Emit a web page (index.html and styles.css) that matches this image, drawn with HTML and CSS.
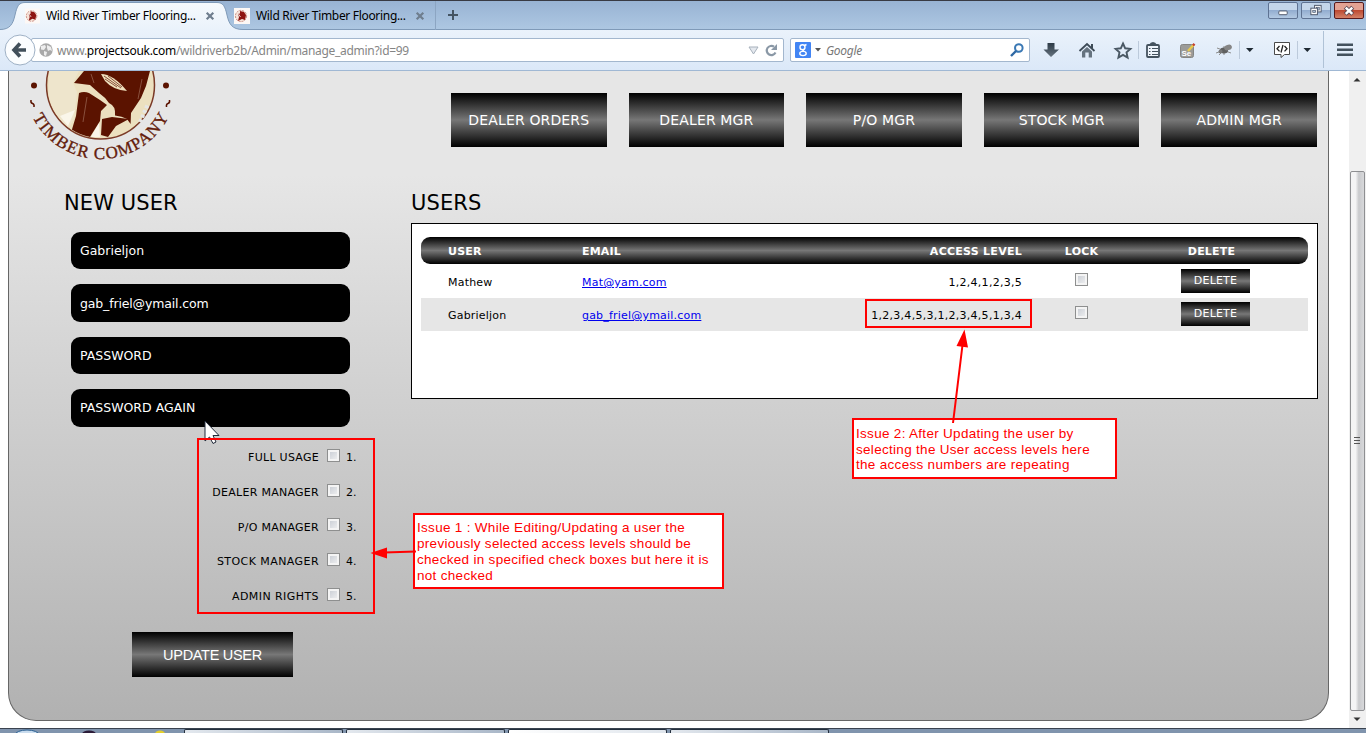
FILE: index.html
```html
<!DOCTYPE html>
<html lang="en">
<head>
<meta charset="utf-8">
<title>Wild River Timber Flooring</title>
<link rel="stylesheet" href="styles.css">
</head>
<body>
<svg width="0" height="0" class="defs">
  <defs>
    <symbol id="fav" viewBox="0 0 16 16">
      <rect width="16" height="16" fill="#fdf8f5"/>
      <circle cx="7" cy="8" r="5.6" fill="#f6e4da" stroke="#c98a7e" stroke-dasharray="2 1"/>
      <path d="M6 3l4 1 2 3-1 5-3-1-4 2 1-4-1-3 2-.5z" fill="#8e1410"/>
      <path d="M4.500 6l2 3" stroke="#fff" stroke-width=".8"/>
    </symbol>
    <symbol id="close" viewBox="0 0 10 10"><path d="M1.700 1.700l6.600 6.600M8.300 1.700l-6.600 6.600" stroke="#6f7e8e" stroke-width="2.200"/></symbol>
    <linearGradient id="dk" x1="0" y1="0" x2="0" y2="1"><stop offset="0" stop-color="#2c3a46"/><stop offset="1" stop-color="#66737f"/></linearGradient>
  </defs>
</svg>
<div class="browser">
  <header class="tabbar">
    <svg class="tabshape" width="250" height="30" viewBox="0 0 250 30">
      <defs><linearGradient id="tg" x1="0" y1="0" x2="0" y2="1"><stop offset="0" stop-color="#f6fafd"/><stop offset="1" stop-color="#eaf2fb"/></linearGradient></defs>
      <path d="M0 30V29.500C10 29.500 13 24 15 15C17 6 19 2.500 25 2.500H217C223 2.500 225 6 227 15C229 24 232 29.500 243 29.500V30z" fill="url(#tg)"/>
      <path d="M0 29.500C10 29.500 13 24 15 15C17 6 19 2.500 25 2.500H217C223 2.500 225 6 227 15C229 24 232 29.500 243 29.500" fill="none" stroke="#7f9ab8"/>
    </svg>
    <div class="tab first"><svg width="15" height="16"><use href="#fav"/></svg><span>Wild River Timber Flooring...</span><svg width="10" height="10"><use href="#close"/></svg></div>
    <div class="tab second"><svg width="16" height="16"><use href="#fav"/></svg><span>Wild River Timber Flooring...</span><svg width="10" height="10"><use href="#close"/></svg></div>
    <div class="newtab"><svg width="12" height="12" viewBox="0 0 12 12"><path d="M6 1v10M1 6h10" stroke="#445463" stroke-width="2"/></svg></div>
    <div class="wincontrols">
      <svg width="30" height="16" viewBox="0 0 30 16"><rect x="10.500" y="8.500" width="9" height="4" rx="1" fill="#fff" stroke="#4a5366"/></svg>
      <svg width="30" height="16" viewBox="0 0 30 16"><rect x="13.500" y="2.500" width="7" height="7" fill="#fff" stroke="#4a5366"/><rect x="15.500" y="4.500" width="3" height="3" fill="#a8bed6" stroke="#4a5366" stroke-width=".7"/><rect x="9.500" y="5.500" width="7" height="7" fill="#fff" stroke="#4a5366"/><rect x="11.500" y="8" width="3" height="2" fill="#a8bed6" stroke="#4a5366" stroke-width=".7"/></svg>
      <svg class="x" width="30" height="16" viewBox="0 0 30 16"><path d="M11 4.500l8 7.500M19 4.500l-8 7.500" stroke="#5a4a56" stroke-width="4.600"/><path d="M11.500 5l7 6.500M18.500 5l-7 6.500" stroke="#fff" stroke-width="2.600"/></svg>
    </div>
  </header>
  <nav class="toolbar">
    <div class="back"><svg width="32" height="32" viewBox="0 0 32 32"><circle cx="16" cy="16" r="15" fill="#fbfdff" stroke="#9fb1c5"/><path d="M22 16H10.500M16 9.500L10 16l6 6.500" fill="none" stroke="#414f5b" stroke-width="3.600"/></svg></div>
    <div class="url">
      <svg width="14" height="14" viewBox="0 0 14 14"><circle cx="7" cy="7" r="6.700" fill="#a9a9a9"/><path d="M2 3l4-1 1 2-2 3-3-.5zM8 2l4 2 1 4-2-1-2 1-1-3zM5 8l3 1-1 4-2-1z" fill="#eee"/></svg>
      <span class="addr">www.<b>projectsouk.com</b>/wildriverb2b/Admin/manage_admin?id=99</span>
      <svg width="11" height="9" viewBox="0 0 11 9"><path d="M1 1h9L5.500 8z" fill="#e4e8ee" stroke="#a7b1bc"/></svg>
      <svg class="reload" width="13" height="13" viewBox="0 0 13 13"><path d="M10.500 8.500A4.600 4.600 0 1 1 9 2.700" fill="none" stroke="#8a98a6" stroke-width="2.200"/><path d="M12 0v6H6z" fill="#8a98a6"/></svg>
    </div>
    <div class="search">
      <svg width="16" height="16" viewBox="0 0 16 16"><rect width="16" height="16" rx="1" fill="#4285f4"/><g fill="none" stroke="#fff" stroke-width="1.400"><ellipse cx="7.500" cy="5.200" rx="2.500" ry="2.500"/><ellipse cx="8" cy="11.500" rx="3.200" ry="2.100"/><path d="M7.500 7.700l1.500 1.700M9.500 3.500l2-1"/></g></svg>
      <svg width="6" height="4" viewBox="0 0 6 4"><path d="M0 0h6L3 3.500z" fill="#555"/></svg>
      <i>Google</i>
      <svg class="mag" width="14" height="14" viewBox="0 0 14 14"><circle cx="8.800" cy="5" r="3.800" fill="none" stroke="#3a78b4" stroke-width="2"/><path d="M6 8l-5 5" stroke="#2f68a4" stroke-width="2.400"/></svg>
    </div>
    <svg class="icons" width="330" height="41" viewBox="1036 30 330 41">
      <path d="M1047.500 43h7v6.500h4.500l-8 7.500-7.500-7.500h4z" fill="url(#dk)"/>
      <path d="M1079.500 51l7.500-7 7.500 7" fill="none" stroke="#3e4b57" stroke-width="1.800"/><path d="M1082 51.500l5-4.500 5 4.500v6h-3.300v-5h-3.400v5h-3.300z" fill="#66737f"/><path d="M1091 44h2v4h-2z" fill="#3e4b57"/>
      <path d="M1123 43.500l2.200 4.800 5.200.6-3.900 3.500 1.100 5.200-4.600-2.700-4.600 2.700 1.100-5.200-3.900-3.500 5.200-.6z" fill="none" stroke="#4a5864" stroke-width="1.900"/>
      <path d="M1138.500 41v18M1239.500 41v18M1297.500 41v18" stroke="#bccadb"/>
      <path d="M1323.500 31v37" stroke="#b0c2d6"/>
      <rect x="1147" y="45" width="12" height="12" rx="1" fill="#eef4fb" stroke="#44525e" stroke-width="1.800"/><path d="M1149 45q1.500-3 4-3t4 3z" fill="#44525e"/><path d="M1149 48.500h1.500M1152 48.500h6M1149 51.500h1.500M1152 51.500h6M1149 54.500h1.500M1152 54.500h6" stroke="#44525e" stroke-width="1.200"/>
      <rect x="1180.500" y="44.500" width="13" height="13" rx="2" fill="#9b9b98" stroke="#858583"/><text x="1181.500" y="56" class="se">Se</text><path d="M1188 51l5.500-6" stroke="#e9c94c" stroke-width="2.400"/><path d="M1193 45.500l1.500-1.600" stroke="#c43e2e" stroke-width="2.400"/>
      <g stroke="#8d8d8d" stroke-width="1"><path d="M1217 48l14 5M1219 55l10-10M1224 46v9M1216 53l6-2"/></g><ellipse cx="1224" cy="50.500" rx="4" ry="3" fill="#5f6060"/><ellipse cx="1228" cy="47.500" rx="4" ry="2.700" fill="#858585" transform="rotate(-20 1228 47.500)"/><circle cx="1220.500" cy="51.500" r="2" fill="#777"/>
      <path d="M1246 48h7.500l-3.700 4zM1303.500 48h7.500l-3.700 4z" fill="#1f2a33"/>
      <path d="M1274.500 42.500h15v12h-5l-3.500 3v-3h-6.500z" fill="#fff" stroke="#4a4a4a"/><path d="M1279.500 46l-2.500 2.700 2.500 2.700M1284.500 46l2.500 2.700-2.500 2.700M1283 45l-2 7.500" fill="none" stroke="#222" stroke-width="1.300"/>
      <path d="M1337 44.800h16M1337 49.800h16M1337 54.800h16" stroke="#43515d" stroke-width="2.600"/>
    </svg>
  </nav>
  <div class="view">
    <main class="page">
      <div class="top">
        <svg class="logo" width="160" height="102" viewBox="20 71 160 102">
          <defs><path id="arc" d="M32.200 116.300A76 76 0 0 0 168.800 116.300"/><clipPath id="disc"><circle cx="100.500" cy="85" r="53"/></clipPath></defs>
          <circle cx="100.500" cy="85" r="54" fill="#ece0bf" stroke="#7b3a27" stroke-width="1.500"/>
          <g clip-path="url(#disc)">
            <path d="M49 71h30l-6 12 4 9-3 27-6 10-20-20z" fill="#eee5cc"/>
            <path d="M60 116l8 10 7-16zM99 122l-8 15h9z" fill="#faf6ea"/>
            <path d="M84 71H150L146 86 141 98 131 113 130.600 124 127 119Q122 116 115 115.500 116 106 109 103 105 97 99 93L90 85 74 83Z" fill="#5b1300"/>
            <path d="M79 93Q84 91 89 93L100 100 107 105 101 111 100 121 90 137 70 136 76 116Z" fill="#5b1300"/>
            <path d="M102 119L112 117 129 119 116 126 108 137 101 135Z" fill="#5b1300"/>
            <path d="M101 74q12 0 26 17-14-1-22-10z" fill="#eee0bd"/><path d="M104 76l17 12M108 76l14 11M105 79l12 8" stroke="#5b1300" stroke-width=".7"/>
            <path d="M142 79l-4 20M87 97l-4 25M91 74l3 9" stroke="#a87a66" stroke-width=".6"/>
          </g>
          <path d="M140 122l8-18" stroke="#e6e6e6" stroke-width="4" stroke-dasharray="3 2"/>
          <circle cx="34" cy="85.500" r="3" fill="#5b1300"/><circle cx="166" cy="85.500" r="3" fill="#5b1300"/>
          <path d="M31 100q-.5 3 1.500 3.500t1.500 3.500M169.500 100q.5 3-1.500 3.500t-1.500 3.500" fill="none" stroke="#5b1300" stroke-width="1.500"/>
          <text class="logotext"><textPath href="#arc" startOffset="1" textLength="168" lengthAdjust="spacing">TIMBER COMPANY</textPath></text>
        </svg>
        <div class="menu"><a>DEALER ORDERS</a><a>DEALER MGR</a><a>P/O MGR</a><a>STOCK MGR</a><a>ADMIN MGR</a></div>
      </div>
      <div class="cols">
        <section class="left">
          <h2>NEW USER</h2>
          <div class="fields">
            <div class="field"><span>Gabrieljon</span></div><div class="field"><span class="mail">gab_friel@ymail.com</span></div><div class="field"><span>PASSWORD</span></div><div class="field"><span>PASSWORD AGAIN</span></div>
          </div>
          <div class="checks">
            <div class="check"><span>FULL USAGE</span><i class="box"></i><b>1.</b></div>
            <div class="check"><span>DEALER MANAGER</span><i class="box"></i><b>2.</b></div>
            <div class="check"><span>P/O MANAGER</span><i class="box"></i><b>3.</b></div>
            <div class="check"><span class="wide">STOCK MANAGER</span><i class="box"></i><b>4.</b></div>
            <div class="check"><span class="wide">ADMIN RIGHTS</span><i class="box"></i><b>5.</b></div>
          </div>
          <div class="update">UPDATE USER</div>
        </section>
        <section class="right">
          <h2>USERS</h2>
          <div class="panel">
            <div class="row head"><span>USER</span><span>EMAIL</span><span class="acc">ACCESS LEVEL</span><span class="mid">LOCK</span><span class="mid del">DELETE</span></div>
            <div class="row"><span>Mathew</span><a>Mat@yam.com</a><span class="acc">1,2,4,1,2,3,5</span><span class="mid"><i class="box"></i></span><span class="mid"><em>DELETE</em></span></div>
            <div class="row alt"><span>Gabrieljon</span><a>gab_friel@ymail.com</a><span class="acc">1,2,3,4,5,3,1,2,3,4,5,1,3,4</span><span class="mid"><i class="box"></i></span><span class="mid"><em>DELETE</em></span></div>
          </div>
        </section>
      </div>
    </main>
    <aside class="scroll">
      <svg width="16" height="17" viewBox="0 0 16 17"><path d="M4.500 10.500h7L8 7z" fill="#333"/></svg>
      <div class="track"></div>
      <div class="thumb"><svg width="8" height="10" viewBox="0 0 8 10"><path d="M0 1.500h6M0 4.500h6M0 7.500h6" stroke="#555"/></svg></div>
      <svg width="16" height="17" viewBox="0 0 16 17"><path d="M4.500 6.500h7L8 10z" fill="#333"/></svg>
    </aside>
  </div>
  <footer class="taskbar">
    <svg width="181" height="4" viewBox="0 0 181 4"><ellipse cx="27" cy="6" rx="12" ry="5" fill="#c9dcee" stroke="#2a5f92"/><ellipse cx="89" cy="5" rx="7" ry="3.500" fill="#2b1b38"/><ellipse cx="160" cy="5" rx="5" ry="3.500" fill="#e4cf2a"/></svg>
    <div class="task"></div><div class="task"></div><div class="task on"></div><div class="task"></div>
  </footer>
</div>
<div class="note one">Issue 1 : While Editing/Updating a user the<br>previously selected access levels should be<br>checked in specified check boxes but here it is<br>not checked</div>
<div class="note two">Issue 2: After Updating the user by<br>selecting the User access levels here<br>the access numbers are repeating</div>
<svg class="marks" width="1366" height="733" viewBox="0 0 1366 733">
  <path d="M205 421v20l4.500-4 3.500 6.500 3-1.500-3-6.500h6z" fill="#fff" stroke="#222b3a"/>
  <g fill="none" stroke="#f00" stroke-width="2"><rect x="198" y="439" width="176" height="174"/><rect x="866" y="300" width="165" height="27"/><path d="M416 551.500L384 552.500M953 423L962.500 345"/></g>
  <path d="M370.500 553L387 547.500V558.500zM964.500 329.500L956.500 346 968 347.500z" fill="#f00"/>
</svg>
</body>
</html>
```
FILE: styles.css
```css
* { box-sizing: border-box; }
body { margin: 0; width: 1366px; height: 733px; overflow: hidden; background: #fff; font-family: "DejaVu Sans", sans-serif; color: #000; }
svg { display: block; flex: none; }
.defs { position: absolute; }
.browser { display: flex; flex-direction: column; height: 733px; }
.tabbar { position: relative; flex: none; height: 30px; display: flex; border-top: 1px solid #383a43; border-bottom: 1px solid #7f9ab8; background: linear-gradient(#98b3d3, #adc7e2); font: 12px "Noto Sans", sans-serif; }
.tabshape { position: absolute; left: 0; top: -1px; }
.tab { position: relative; display: flex; align-items: center; height: 29px; }
.tab span { margin-left: 6px; width: 159px; white-space: nowrap; letter-spacing: -0.32px; }
.first { padding-left: 25px; width: 234px; }
.second { width: 202px; border-right: 1px solid #8ca5c2; }
.newtab { display: flex; align-items: center; margin-left: 11px; }
.wincontrols { display: flex; gap: 3px; margin-left: auto; padding: 1px 2px 0 0; }
.wincontrols svg { height: 17px; border: 1px solid #5e7292; border-radius: 2px; background: linear-gradient(#c4d6ea 45%, #93add0 50%, #b3c9e2); }
.wincontrols .x { background: linear-gradient(#e3a293 45%, #bd4a32 50%, #d38168); border-color: #571a1d; }
.toolbar { flex: none; height: 41px; display: flex; align-items: center; background: linear-gradient(#eaf2fb, #dbe8f8); border-bottom: 1px solid #a0b8d4; font: 12px "Noto Sans", sans-serif; }
.back { margin-left: 4px; width: 28px; position: relative; z-index: 1; }
.url { width: 753px; height: 24px; margin-left: -1px; border: 1px solid #a3b7ce; border-radius: 2px; background: #fff; display: flex; align-items: center; padding: 0 5px 0 7px; }
.addr { margin-left: 4px; color: #858585; flex: 1; white-space: nowrap; letter-spacing: -0.3px; }
.addr b { font-weight: 400; color: #000; }
.reload { margin-left: 6px; }
.search { width: 240px; height: 24px; margin-left: 6px; border: 1px solid #a3b7ce; border-radius: 2px; background: #fff; display: flex; align-items: center; padding: 0 5px 0 4px; gap: 4px; color: #777; }
.search i { margin-left: 1px; letter-spacing: -.3px; }
.mag { margin-left: auto; }
.icons { margin-left: auto; }
.se { font: bold 8px "Liberation Sans", sans-serif; fill: #fff; }
.view { flex: none; height: 657px; display: flex; }
.page { width: 1321px; height: 650px; margin-left: 8px; border: 1px solid #666; border-top: 0; border-radius: 0 0 28px 28px; background: linear-gradient(#e6e6e6 16%, #b1b1b1); }
.top { display: flex; height: 120px; }
.logo { margin-left: 11px; }
.logotext { font: 17px "Liberation Serif", serif; fill: #641d0c; stroke: #641d0c; stroke-width: .35px; }
.menu { display: grid; grid-template-columns: repeat(5, 1fr); gap: 22px; width: 866px; height: 54px; margin: 22px 0 0 271px; }
.menu a { display: flex; align-items: center; justify-content: center; color: #fff; font-size: 14px; letter-spacing: .15px; background: linear-gradient(#000, #777 50%, #000); white-space: nowrap; }
.cols { display: flex; }
.left { width: 347px; margin-left: 55px; }
h2 { margin: 0; font-size: 21px; line-height: 24px; font-weight: 400; height: 32px; white-space: nowrap; letter-spacing: .1px; }
.fields { margin: 9px 0 0 7px; width: 279px; display: flex; flex-direction: column; gap: 15px; }
.field { height: 37.400px; border-radius: 9px; background: #000; color: #fff; font-size: 12.500px; padding-left: 9px; display: flex; align-items: center; white-space: nowrap; }
.mail { letter-spacing: -.15px; }
.checks { margin-top: 14px; width: 293px; font-size: 11px; letter-spacing: .27px; }
.check { height: 34.700px; display: flex; align-items: center; justify-content: flex-end; }
.check span { white-space: nowrap; }
.check .wide { letter-spacing: .43px; }
.check b { font-weight: 400; width: 11px; margin-left: 6px; white-space: nowrap; letter-spacing: 0; }
.box { display: block; width: 13px; height: 13px; border: 1px solid #8e8f8f; background: linear-gradient(135deg, #c4c9d1, #f4f4f4); box-shadow: inset 0 0 0 2px #f4f4f4; }
.check .box { margin: -5px 0 0 8px; }
.update { width: 161px; height: 45px; margin: 18px 0 0 68px; background: linear-gradient(#000, #777, #000); color: #fff; font: 14.500px "Liberation Sans", sans-serif; display: flex; align-items: center; justify-content: center; letter-spacing: -.3px; }
.right { width: 907px; }
.panel { height: 176px; border: 1px solid #000; background: #fff; padding: 13px 9px; font-size: 11px; letter-spacing: .2px; }
.row { display: grid; grid-template-columns: 134px 240px 200px 119px 149px; align-items: center; height: 33px; padding: 2px 0 0 27px; white-space: nowrap; }
.row a { color: #00e; text-decoration: underline; }
.head { height: 27px; margin-bottom: 1px; border-radius: 9px; color: #fff; font-weight: 700; background: linear-gradient(#000, #777, #000); letter-spacing: .2px; }
.alt { background: #e6e6e6; }
.acc { text-align: right; letter-spacing: .27px; }
.mid { display: flex; justify-content: center; }
.del { position: relative; left: -4px; }
.mid .box { margin-top: -6px; }
.row em { font-style: normal; width: 69px; height: 24px; margin-top: -4px; display: flex; align-items: center; justify-content: center; color: #fff; background: linear-gradient(#000, #777, #000); }
.scroll { width: 17px; margin-left: auto; background: #f0f0f0; display: flex; flex-direction: column; }
.track { height: 83px; }
.thumb { height: 540px; width: 15px; margin-left: 1px; border: 1px solid #8e8f92; border-radius: 2px; background: linear-gradient(90deg, #f4f4f5 35%, #c9cacd 60%, #d8d9db); display: flex; align-items: center; justify-content: center; }
.taskbar { flex: none; height: 5px; border-top: 1px solid #3a4350; background: #8094ad; display: flex; gap: 3px; }
.task { width: 159px; height: 5px; border: 1px solid #242f3d; background: linear-gradient(90deg, #e3e8ee, #a9b7c8); border-bottom: 0; border-radius: 2px 2px 0 0; }
.task.on { background: linear-gradient(90deg, #fff, #dfe5ec); }
.note { position: absolute; background: #fff; border: 2px solid #f00; color: #f00; font: 13.500px/16px "Liberation Sans", sans-serif; padding: 5px 2px 0; white-space: nowrap; letter-spacing: .3px; }
.one { left: 413px; top: 513px; width: 311px; height: 76px; }
.two { left: 852px; top: 418px; width: 265px; height: 61px; line-height: 15.600px; padding-top: 6px; }
.marks { position: absolute; left: 0; top: 0; }
```
